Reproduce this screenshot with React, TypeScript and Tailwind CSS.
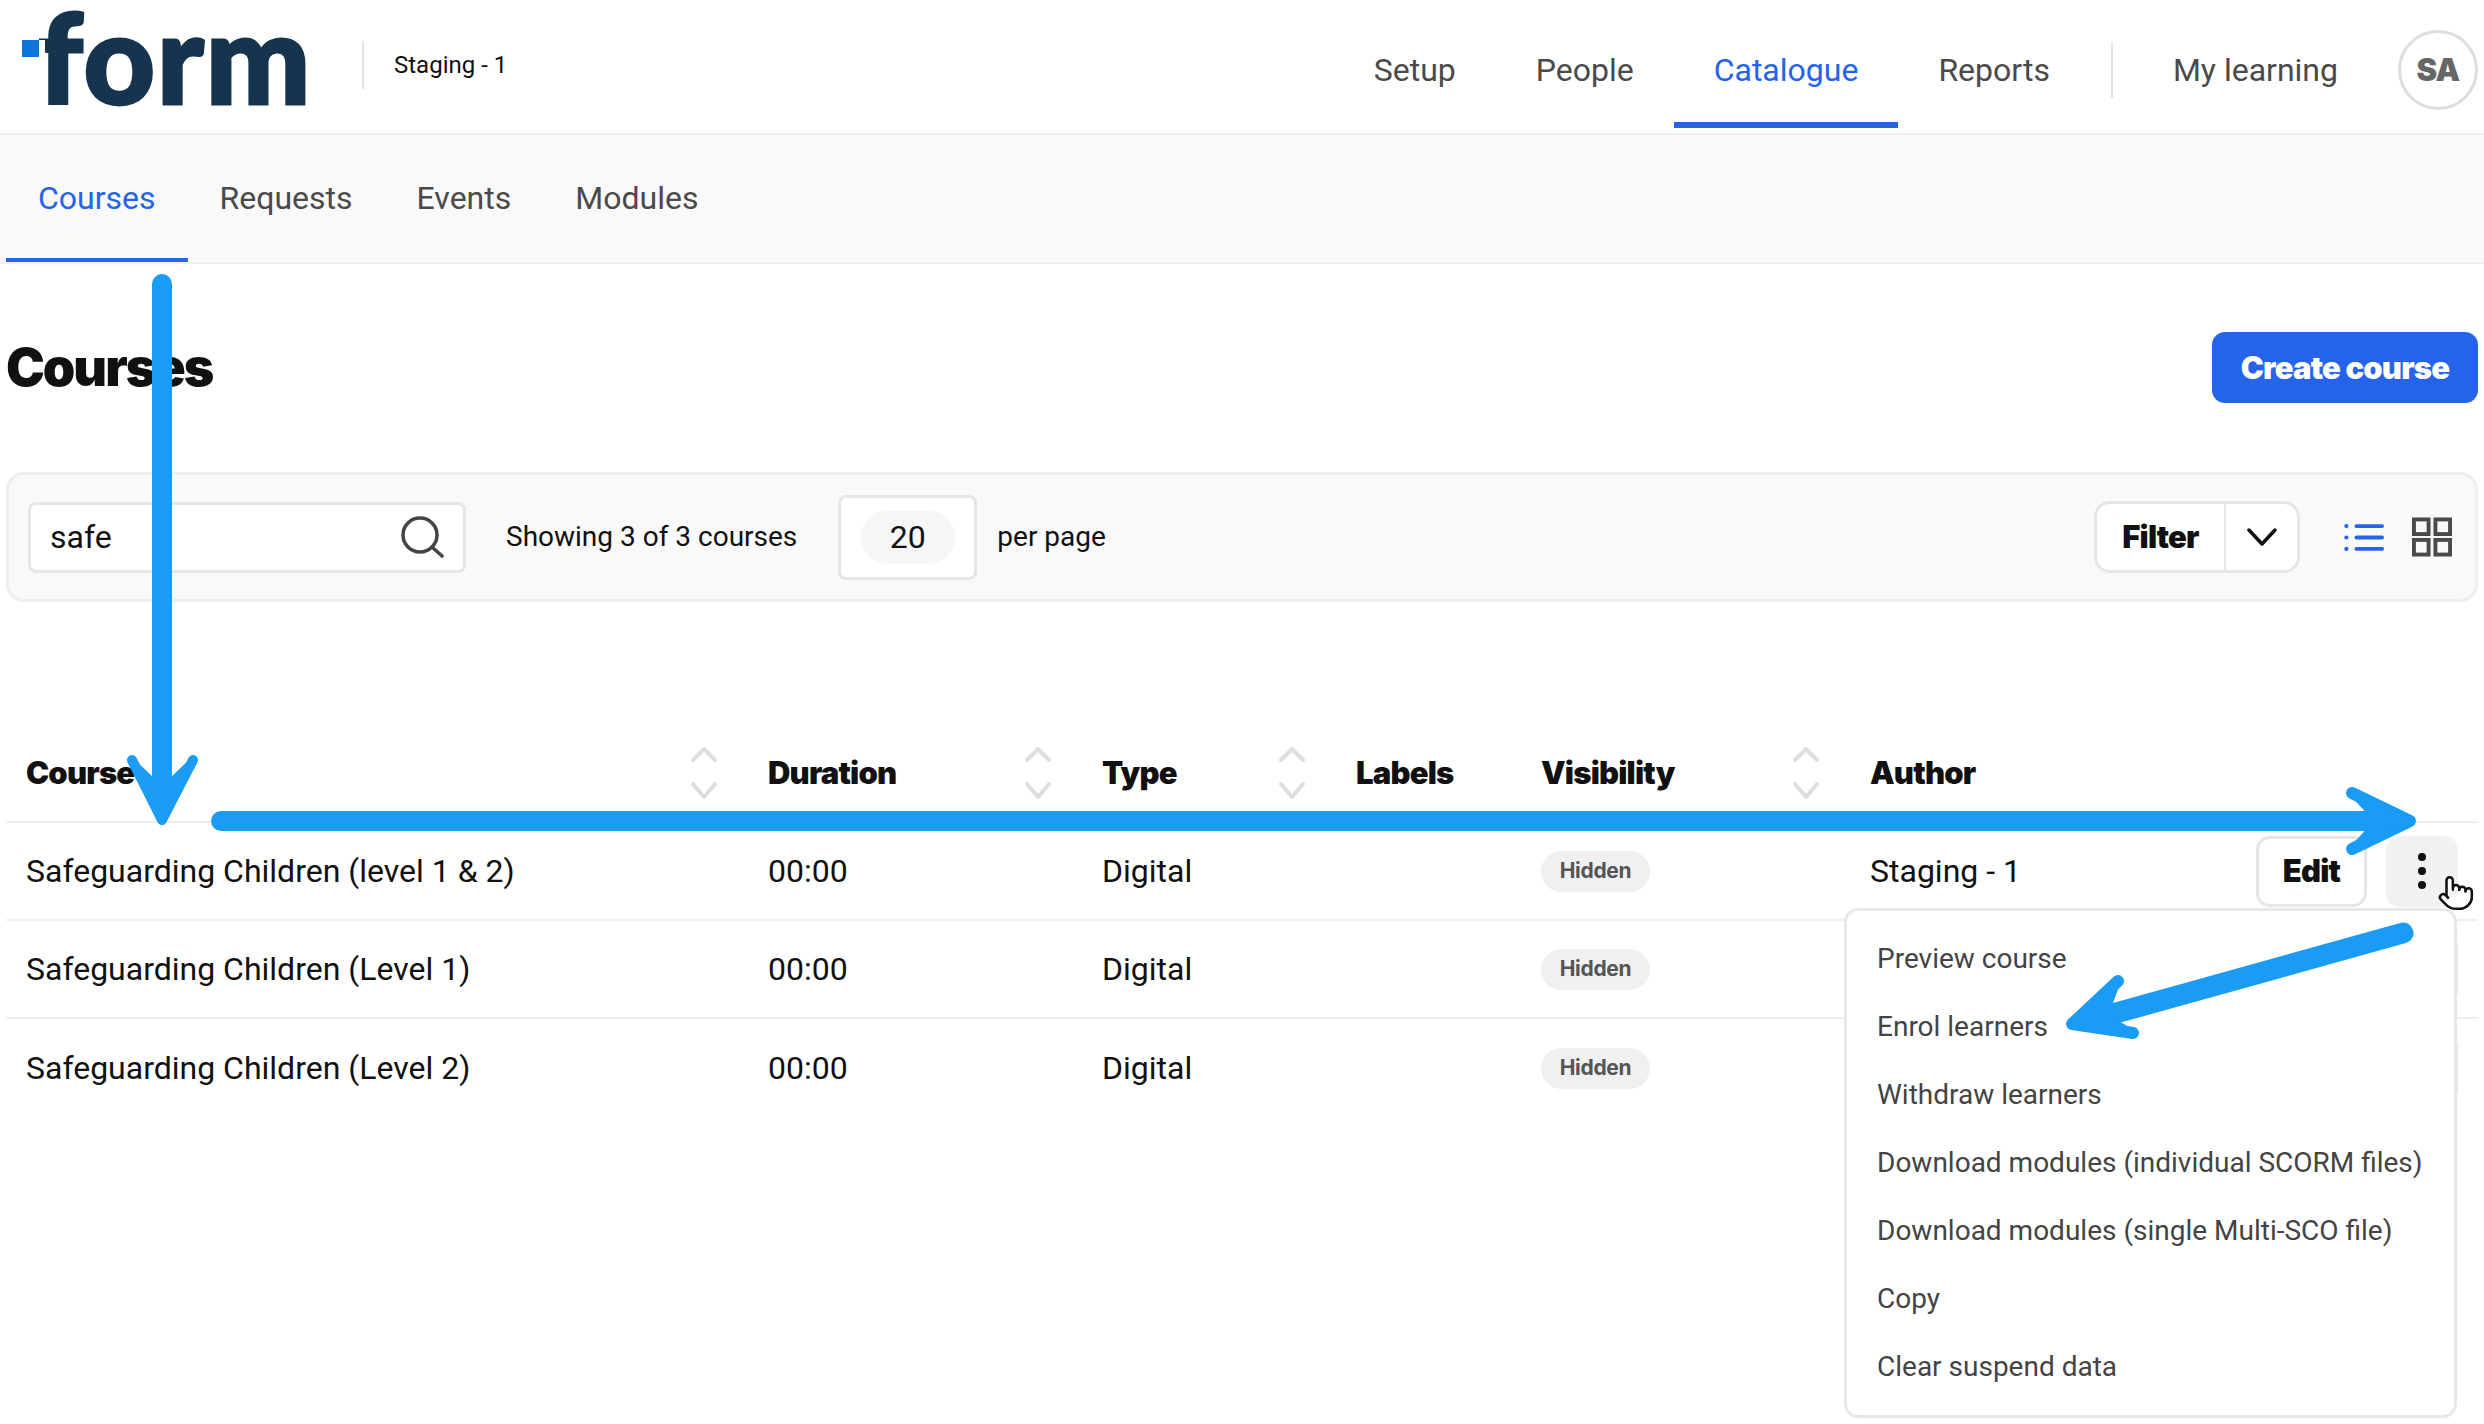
import { Pointer } from "lucide-react";

const topLinks = ["Setup", "People", "Catalogue", "Reports"];
const tabs = ["Courses", "Requests", "Events", "Modules"];

const courses = [
  "Safeguarding Children (level 1 & 2)",
  "Safeguarding Children (Level 1)",
  "Safeguarding Children (Level 2)",
];

const menuItems = [
  "Preview course",
  "Enrol learners",
  "Withdraw learners",
  "Download modules (individual SCORM files)",
  "Download modules (single Multi-SCO file)",
  "Copy",
  "Clear suspend data",
];

const SortIcon = () => (
  <svg viewBox="0 0 28 54" className="w-[28px] h-[54px] shrink-0" fill="none" stroke="#dedede" strokeWidth="4" strokeLinecap="round" strokeLinejoin="round">
    <polyline points="3,14 14,3 25,14" />
    <polyline points="3,38 14,51 25,38" />
  </svg>
);

const headerCell = "flex items-center justify-between pr-[50px] font-[Inter,sans-serif] font-black text-[31px] tracking-[-0.8px] text-[#111]";

const App = () => {
  return (
    <div className="relative w-[2484px] h-[1424px] overflow-hidden bg-white font-[Roboto,sans-serif]">
      {/* Top bar */}
      <header className="flex items-center h-[135px] border-b-[2px] border-[#eeeeee] pl-[22px] pr-[6px]">
        <div className="flex w-[286px] h-[133px] items-start">
          {/* white edge hides the left of the f's crossbar, the logo has none */}
          <span className="relative z-10 box-content w-[17px] h-[17px] mt-[40px] border-r-[6px] border-white bg-[#0a74da] shrink-0" />
          <span className="mt-[6px] ml-[-7px] font-[Lato,sans-serif] font-black text-[124px] leading-[100px] tracking-[2px] [-webkit-text-stroke:3px_#17344f] text-[#17344f]">form</span>
        </div>
        <div className="ml-[54px] mb-[3px] w-[2px] h-[48px] bg-[#e3e3e3]" />
        <span className="ml-[30px] mb-[3px] text-[24px] text-[#111]">Staging - 1</span>
        <nav className="ml-auto flex items-center h-full text-[32px] text-[#4a4a4a]">
          {topLinks.map((link) => (
            <a
              key={link}
              className={
                link === "Catalogue"
                  ? "flex items-center self-start h-[128px] px-[40px] pt-[18px] text-[#2563eb] border-b-[6px] border-[#2563eb]"
                  : "flex items-center self-start h-[128px] px-[40px] pt-[18px] border-b-[6px] border-transparent"
              }
            >
              {link}
            </a>
          ))}
          <div className="ml-[21px] mt-[7px] w-[2px] h-[56px] bg-[#e3e3e3]" />
          <a className="ml-[60px] mt-[7px]">My learning</a>
          <div className="ml-[60px] mt-[7px] flex items-center justify-center w-[80px] h-[80px] rounded-full border-[3px] border-[#dddddd] font-[Inter,sans-serif] font-black text-[31px] tracking-[-0.8px] text-[#666]">
            SA
          </div>
        </nav>
      </header>

      {/* Sub navigation */}
      <div className="flex h-[129px] bg-[#f9f9f9] border-b-[2px] border-[#eeeeee] pl-[6px] text-[32px] text-[#4a4a4a]">
        {tabs.map((tab) => (
          <a
            key={tab}
            className={
              tab === "Courses"
                ? "flex items-center px-[32px] h-[127px] pt-[3px] text-[#2563eb] border-b-[4px] border-[#2563eb]"
                : "flex items-center px-[32px] h-[127px] pt-[3px] border-b-[4px] border-transparent"
            }
          >
            {tab}
          </a>
        ))}
      </div>

      <main className="px-[6px]">
        {/* Heading */}
        <div className="flex items-center justify-between pt-[68px] pb-[69px]">
          <h1 className="font-[Inter,sans-serif] font-black text-[52px] leading-none tracking-[-2px] text-[#111]">Courses</h1>
          <button className="w-[266px] h-[71px] pt-[2px] rounded-[13px] bg-[#2563eb] font-[Inter,sans-serif] font-black text-[31px] tracking-[-0.8px] text-white">
            Create course
          </button>
        </div>

        {/* Toolbar */}
        <div className="flex items-center h-[130px] rounded-[18px] border-[3px] border-[#eeeeee] bg-[#f9f9f9] pl-[19px] pr-[23px] text-[#111]">
          <div className="flex items-center justify-between w-[438px] h-[71px] rounded-[8px] border-[3px] border-[#e6e6e6] bg-white pl-[19px] pr-[19px]">
            <span className="text-[32px]">safe</span>
            <svg viewBox="0 0 44 42" className="w-[44px] h-[42px]" fill="none" stroke="#444" strokeWidth="3.5" strokeLinecap="round">
              <circle cx="20" cy="19" r="17" />
              <line x1="32" y1="31" x2="42" y2="40" />
            </svg>
          </div>
          <span className="ml-[40px] text-[28px]">Showing 3 of 3 courses</span>
          <div className="ml-[41px] flex items-center justify-center w-[139px] h-[85px] rounded-[8px] border-[3px] border-[#e6e6e6] bg-white">
            <span className="flex items-center justify-center w-[94px] h-[54px] rounded-[27px] bg-[#f6f6f6] text-[32px]">20</span>
          </div>
          <span className="ml-[20px] text-[28px]">per page</span>

          <div className="ml-auto flex items-center h-[72px] rounded-[16px] border-[3px] border-[#e6e6e6] bg-white">
            <span className="flex items-center justify-center w-[129px] h-full border-r-[2px] border-[#e6e6e6] font-[Inter,sans-serif] font-black text-[31px] tracking-[-0.8px]">Filter</span>
            <span className="flex items-center justify-center w-[71px] h-full">
              <svg viewBox="0 0 30 18" className="w-[30px] h-[18px]" fill="none" stroke="#111" strokeWidth="3.5" strokeLinecap="round" strokeLinejoin="round">
                <polyline points="2,2 15,16 28,2" />
              </svg>
            </span>
          </div>
          <svg viewBox="0 0 42 30" className="ml-[44px] w-[40px] h-[29px]" fill="#2563eb">
            <circle cx="2.5" cy="3" r="2.2" />
            <circle cx="2.5" cy="15" r="2.2" />
            <circle cx="2.5" cy="27" r="2.2" />
            <rect x="11" y="1" width="31" height="4" rx="2" />
            <rect x="11" y="13" width="31" height="4" rx="2" />
            <rect x="11" y="25" width="31" height="4" rx="2" />
          </svg>
          <svg viewBox="0 0 41 40" className="ml-[28px] w-[40px] h-[40px]" fill="none" stroke="#4a4a4a" strokeWidth="4">
            <rect x="2" y="2" width="15" height="15" />
            <rect x="24" y="2" width="15" height="15" />
            <rect x="2" y="23" width="15" height="15" />
            <rect x="24" y="23" width="15" height="15" />
          </svg>
        </div>

        {/* Table */}
        <div className="mt-[123px] grid grid-cols-[742px_334px_254px_185px_329px_1fr] items-center h-[98px] border-b-[2px] border-[#eeeeee] pl-[20px]">
          <div className={headerCell}>Course<SortIcon /></div>
          <div className={headerCell}>Duration<SortIcon /></div>
          <div className={headerCell}>Type<SortIcon /></div>
          <div className={headerCell}>Labels</div>
          <div className={headerCell}>Visibility<SortIcon /></div>
          <div className={headerCell}>Author</div>
        </div>

        {courses.map((course, i) => (
          <div
            key={course}
            className={
              i < 2
                ? "grid grid-cols-[742px_334px_254px_185px_329px_1fr] items-center h-[98px] border-b-[2px] border-[#eeeeee] pl-[20px] text-[32px] text-[#111]"
                : "grid grid-cols-[742px_334px_254px_185px_329px_1fr] items-center h-[98px] pl-[20px] text-[32px] text-[#111]"
            }
          >
            <span>{course}</span>
            <span>00:00</span>
            <span>Digital</span>
            <span />
            <span className="flex items-center">
              <span className="inline-flex items-center justify-center w-[109px] h-[41px] rounded-full bg-[#f0f0f0] font-[Inter,sans-serif] font-bold text-[21px] tracking-[-0.3px] text-[#555]">Hidden</span>
            </span>
            <div className="flex items-center justify-between pr-[20px]">
              <span>Staging - 1</span>
              <div className="flex items-center gap-[19px]">
                <button className="w-[111px] h-[71px] rounded-[14px] border-[3px] border-[#e6e6e6] bg-white font-[Inter,sans-serif] font-black text-[31px] tracking-[-0.8px]">Edit</button>
                {i === 0 ? (
                  <div className="relative flex flex-col items-center justify-center gap-[6.5px] w-[72px] h-[71px] rounded-[14px] bg-[#f1f1f1]">
                    <span className="w-[7.5px] h-[7.5px] rounded-full bg-[#111]" />
                    <span className="w-[7.5px] h-[7.5px] rounded-full bg-[#111]" />
                    <span className="w-[7.5px] h-[7.5px] rounded-full bg-[#111]" />
                    <ul className="absolute z-10 right-[1px] top-[72px] flex flex-col w-[613px] h-[510px] rounded-[14px] border-[3px] border-[#e8e8e8] bg-white py-[14px] pl-[30px] text-[28px] text-[#444]">
                      {menuItems.map((item) => (
                        <li key={item} className="flex items-center h-[68px] shrink-0 whitespace-nowrap">{item}</li>
                      ))}
                    </ul>
                    <Pointer className="absolute z-20 left-[51px] top-[38px]" size={38} fill="white" stroke="#111" strokeWidth={1.6} />
                  </div>
                ) : (
                  <div className="w-[72px] h-[71px] rounded-[14px] border-[3px] border-[#e6e6e6]" />
                )}
              </div>
            </div>
          </div>
        ))}
      </main>

      {/* Annotation arrows drawn over the screenshot */}
      <svg viewBox="0 0 2484 1424" className="absolute inset-0 z-30 w-[2484px] h-[1424px] pointer-events-none" fill="none" stroke="#1a9cf5" strokeLinecap="round" strokeLinejoin="round">
        <line x1="162" y1="284" x2="162" y2="790" strokeWidth="20" />
        <polyline points="132,760 162,820 193,760" strokeWidth="10" />
        <path d="M136 765 L162 820 L188 765 L162 790 Z" fill="#1a9cf5" strokeWidth="6" />
        <line x1="221" y1="821" x2="2385" y2="821" strokeWidth="20" />
        <polyline points="2352,793 2410,821 2352,849" strokeWidth="12" />
        <path d="M2352 793 L2410 821 L2352 849 L2378 821 Z" fill="#1a9cf5" strokeWidth="6" />
        <line x1="2403" y1="933" x2="2105" y2="1016" strokeWidth="21" />
        <polyline points="2118,981 2072,1024 2133,1033" strokeWidth="12" />
        <path d="M2118 981 L2072 1024 L2133 1033 L2105 1016 Z" fill="#1a9cf5" strokeWidth="6" />
      </svg>
    </div>
  );
};

export default App;
